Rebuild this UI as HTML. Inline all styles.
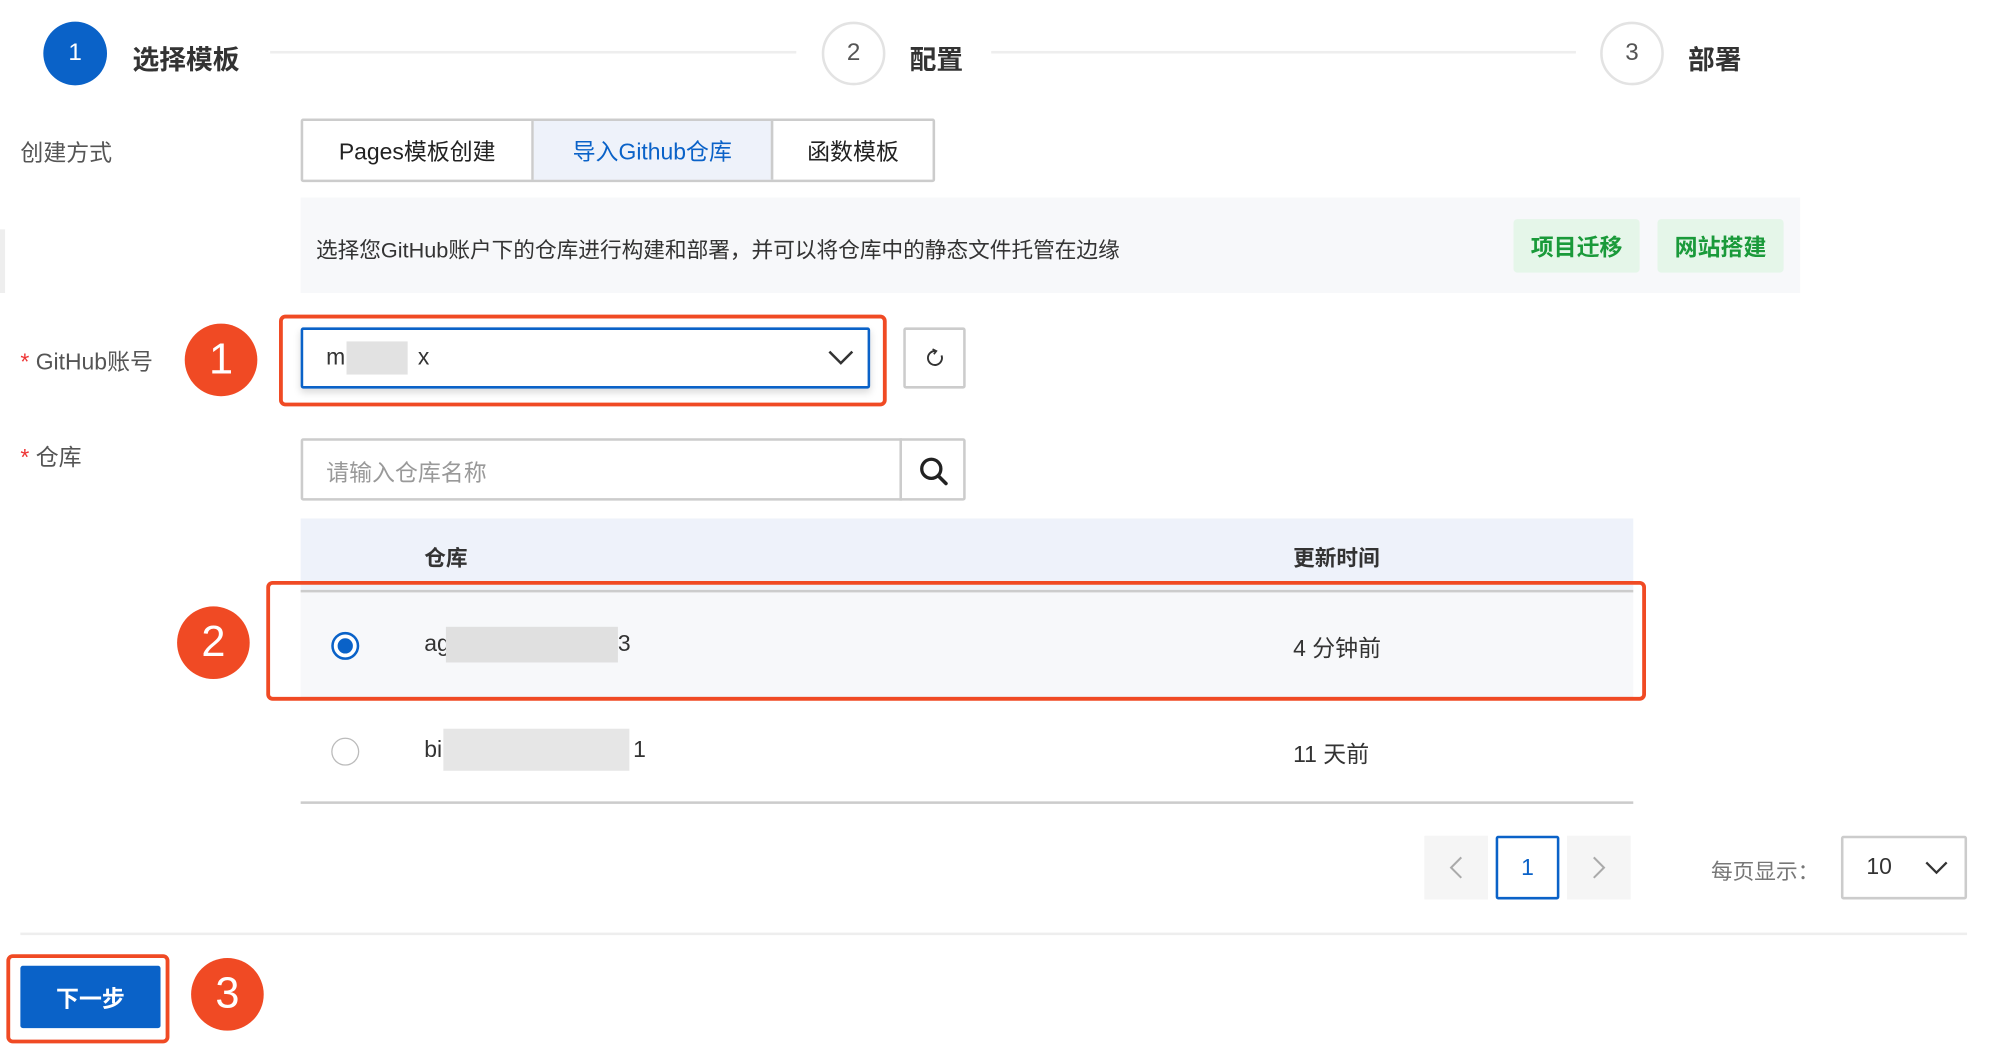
<!DOCTYPE html>
<html><head><meta charset="utf-8"><style>
*{box-sizing:border-box;margin:0;padding:0}
html,body{width:1998px;height:1052px;overflow:hidden;background:#fff}
#w{position:absolute;left:0;top:0;width:1570px;height:826px;transform:scale(1.274);transform-origin:0 0;font-family:"Liberation Sans","Noto Sans CJK SC",sans-serif;color:#333}
.a{position:absolute}
.c{display:flex;align-items:center;justify-content:center}
.badge{position:absolute;border-radius:50%;background:#f04a24;color:#fff;font-size:34px;display:flex;align-items:center;justify-content:center}
.red{position:absolute;border:3px solid #f04a24;border-radius:5px}
.st{font-size:21px;font-weight:bold;color:#333}
.lbl{font-size:18px;color:#555}
.blur{position:absolute;background:#ddd}
</style></head><body><div id="w">
<div class="a c" style="left:34px;top:17px;width:50px;height:50px;border-radius:50%;background:#0a62c8;color:#fff;font-size:19px">1</div>
<div class="a st" style="left:104px;top:31px">选择模板</div>
<div class="a" style="left:212px;top:40px;width:413px;height:2px;background:#eee"></div>
<div class="a c" style="left:645px;top:17px;width:50px;height:50px;border-radius:50%;border:2px solid #e3e3e3;color:#555;font-size:19px">2</div>
<div class="a st" style="left:714px;top:31px">配置</div>
<div class="a" style="left:778px;top:40px;width:459px;height:2px;background:#eee"></div>
<div class="a c" style="left:1256px;top:17px;width:50px;height:50px;border-radius:50%;border:2px solid #e3e3e3;color:#555;font-size:19px">3</div>
<div class="a st" style="left:1325px;top:31px">部署</div>
<div class="a lbl" style="left:16px;top:106px">创建方式</div>
<div class="a" style="left:236px;top:93px;width:498px;height:50px;border:2px solid #ccc;border-radius:2px;display:flex;font-size:18px">
<div class="c" style="width:181px;border-right:2px solid #ccc;color:#222">Pages模板创建</div>
<div class="c" style="width:188px;border-right:2px solid #ccc;background:#eef2fa;color:#0a62c8">导入Github仓库</div>
<div class="c" style="flex:1;color:#222">函数模板</div></div>
<div class="a" style="left:236px;top:155px;width:1177px;height:75px;background:#f7f8fa"></div>
<div class="a" style="left:248px;top:182px;font-size:17px;color:#333">选择您GitHub账户下的仓库进行构建和部署，并可以将仓库中的静态文件托管在边缘</div>
<div class="a c" style="left:1188px;top:172px;width:99px;height:42px;background:#e5f6e9;color:#1a9a3a;font-size:18px;font-weight:bold;border-radius:3px">项目迁移</div>
<div class="a c" style="left:1301px;top:172px;width:99px;height:42px;background:#e5f6e9;color:#1a9a3a;font-size:18px;font-weight:bold;border-radius:3px">网站搭建</div>
<div class="a" style="left:0;top:180px;width:4px;height:50px;background:#eee"></div>
<div class="a lbl" style="left:16px;top:270px"><span style="color:#e33">*</span> GitHub账号</div>
<div class="badge" style="left:145px;top:254px;width:57px;height:57px">1</div>
<div class="red" style="left:219px;top:247px;width:477px;height:72px"></div>
<div class="a" style="left:236px;top:257px;width:447px;height:48px;border:2px solid #0a62c8;border-radius:2px;box-shadow:0 3px 6px rgba(0,0,0,.15)"></div>
<div class="a" style="left:256px;top:270px;font-size:18px">m</div>
<div class="blur" style="left:272px;top:268px;width:48px;height:26px;background:#e2e2e2"></div>
<div class="a" style="left:328px;top:270px;font-size:18px">x</div>
<svg class="a" style="left:648px;top:272px" width="24" height="16"><path d="M3 4l9 9 9-9" fill="none" stroke="#333" stroke-width="2"/></svg>
<div class="a c" style="left:709px;top:257px;width:49px;height:48px;border:2px solid #ccc;border-radius:2px">
<svg width="16" height="16" viewBox="0 0 16 16"><path d="M8 2.5A5.5 5.5 0 1 0 13 6" fill="none" stroke="#333" stroke-width="1.5"/><path d="M6 1l3 1.5-2 2.5" fill="none" stroke="#333" stroke-width="1.3"/></svg></div>
<div class="a lbl" style="left:16px;top:345px"><span style="color:#e33">*</span> 仓库</div>
<div class="a" style="left:236px;top:344px;width:522px;height:49px;border:2px solid #ccc;border-radius:2px"></div>
<div class="a" style="left:706px;top:344px;width:2px;height:49px;background:#ccc"></div>
<div class="a" style="left:256px;top:357px;font-size:18px;color:#999">请输入仓库名称</div>
<svg class="a" style="left:720px;top:357px" width="26" height="26" viewBox="0 0 26 26"><circle cx="11" cy="11" r="7.5" fill="none" stroke="#222" stroke-width="2.6"/><path d="M16.5 16.5l6 6" stroke="#222" stroke-width="2.8" stroke-linecap="round"/></svg>
<div class="a" style="left:236px;top:407px;width:1046px;height:56px;background:#eef2fa"></div>
<div class="a" style="left:333px;top:424px;font-size:17px;font-weight:bold">仓库</div>
<div class="a" style="left:1015px;top:424px;font-size:17px;font-weight:bold">更新时间</div>
<div class="a" style="left:236px;top:463px;width:1046px;height:86px;background:#f7f8fa;border-top:2px solid #ccc;border-bottom:2px solid #ccc"></div>
<div class="a" style="left:260px;top:496px;width:22px;height:22px;border-radius:50%;border:2px solid #0a62c8;background:#fff"></div>
<div class="a" style="left:265px;top:501px;width:12px;height:12px;border-radius:50%;background:#0a62c8"></div>
<div class="a" style="left:333px;top:495px;font-size:18px">ag</div>
<div class="blur" style="left:350px;top:492px;width:135px;height:28px;background:#e0e0e0"></div>
<div class="a" style="left:485px;top:495px;font-size:18px">3</div>
<div class="a" style="left:1015px;top:495px;font-size:18px">4 分钟前</div>
<div class="red" style="left:209px;top:456px;width:1083px;height:94px"></div>
<div class="badge" style="left:139px;top:476px;width:57px;height:57px">2</div>
<div class="a" style="left:260px;top:579px;width:22px;height:22px;border-radius:50%;border:1.5px solid #bbb"></div>
<div class="a" style="left:333px;top:578px;font-size:18px">bi</div>
<div class="blur" style="left:348px;top:572px;width:146px;height:33px;background:#e6e6e6"></div>
<div class="a" style="left:497px;top:578px;font-size:18px">1</div>
<div class="a" style="left:1015px;top:578px;font-size:18px">11 天前</div>
<div class="a" style="left:236px;top:629px;width:1046px;height:2px;background:#ccc"></div>
<div class="a c" style="left:1118px;top:656px;width:50px;height:50px;background:#f5f5f5"><svg width="12" height="20"><path d="M10 2L2 10l8 8" fill="none" stroke="#aaa" stroke-width="1.6"/></svg></div>
<div class="a c" style="left:1174px;top:656px;width:50px;height:50px;border:2px solid #0a62c8;border-radius:2px;color:#0a62c8;font-size:18px">1</div>
<div class="a c" style="left:1230px;top:656px;width:50px;height:50px;background:#f5f5f5"><svg width="12" height="20"><path d="M2 2l8 8-8 8" fill="none" stroke="#aaa" stroke-width="1.6"/></svg></div>
<div class="a" style="left:1343px;top:670px;font-size:17px;color:#777">每页显示：</div>
<div class="a" style="left:1445px;top:656px;width:99px;height:50px;border:2px solid #ccc;border-radius:2px"></div>
<div class="a" style="left:1465px;top:670px;font-size:18px">10</div>
<svg class="a" style="left:1510px;top:674px" width="20" height="14"><path d="M2 3l8 8 8-8" fill="none" stroke="#333" stroke-width="1.8"/></svg>
<div class="a" style="left:16px;top:732px;width:1528px;height:2px;background:#eee"></div>
<div class="a c" style="left:16px;top:758px;width:110px;height:49px;background:#0a62c8;color:#fff;font-size:18px;font-weight:bold;border-radius:2px">下一步</div>
<div class="red" style="left:5px;top:749px;width:128px;height:70px"></div>
<div class="badge" style="left:150px;top:752px;width:57px;height:57px">3</div>
</div></body></html>
